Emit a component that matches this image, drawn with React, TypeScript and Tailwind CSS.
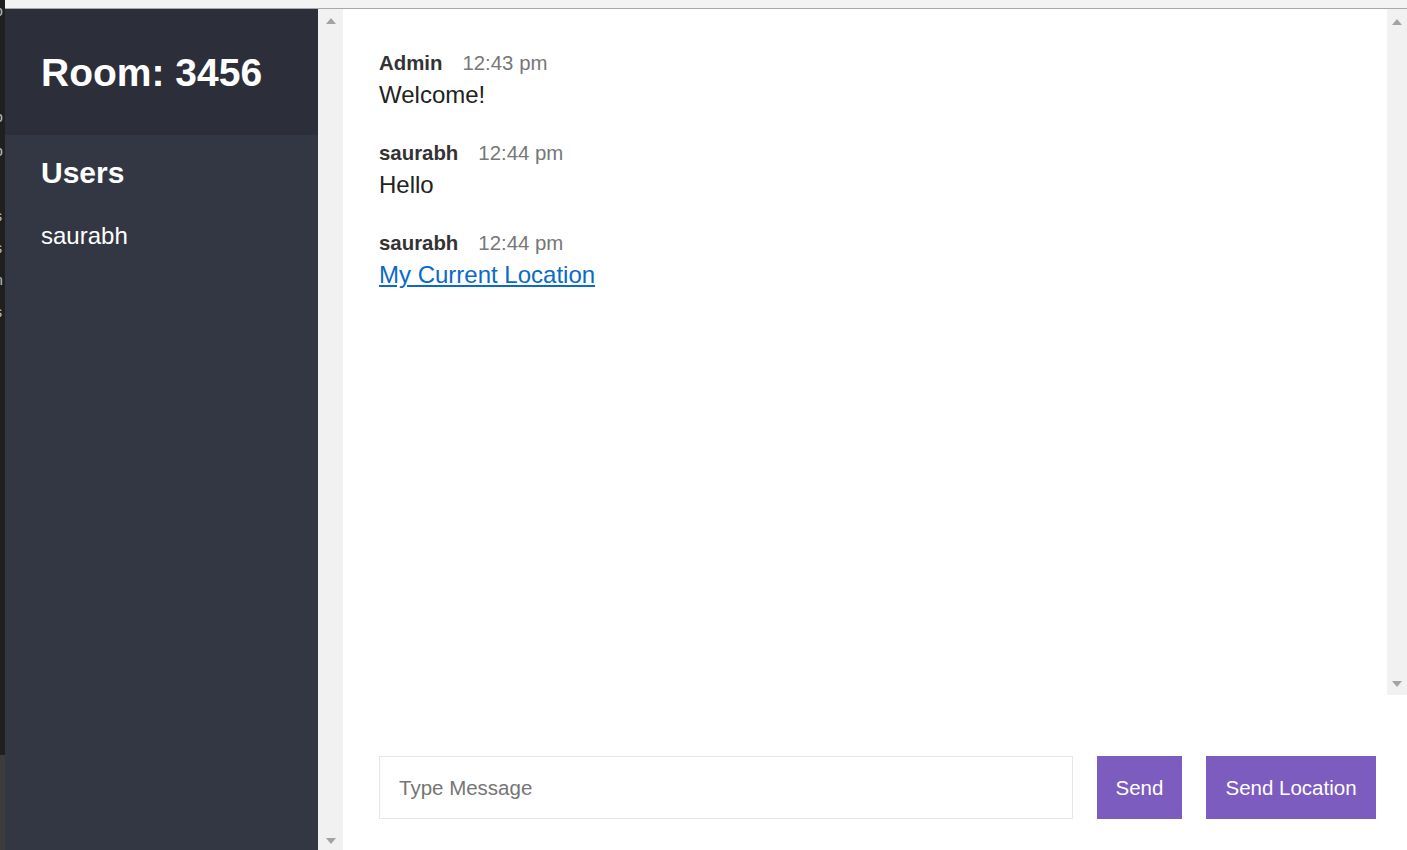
import React from "react";

interface Message {
  author: string;
  time: string;
  text: string;
  link?: boolean;
}

const messages: Message[] = [
  { author: "Admin", time: "12:43 pm", text: "Welcome!" },
  { author: "saurabh", time: "12:44 pm", text: "Hello" },
  { author: "saurabh", time: "12:44 pm", text: "My Current Location", link: true },
];

const users = ["saurabh"];

const ArrowUp = () => (
  <svg width="10" height="6" viewBox="0 0 10 6" className="fill-[#a3a3a3]">
    <path d="M5 0 L10 6 L0 6 Z" />
  </svg>
);

const ArrowDown = () => (
  <svg width="10" height="6" viewBox="0 0 10 6" className="fill-[#a3a3a3]">
    <path d="M0 0 L10 0 L5 6 Z" />
  </svg>
);

// clipped text of the window behind, on the left edge
const EdgeStrip = () => (
  <div className="flex h-full w-[5px] shrink-0 flex-col overflow-hidden">
    <div className="h-[755px] bg-[#1f1f1f] text-[14px] leading-none text-[#b9c4d0]">
      <div className="-ml-[5px] mt-[4px]">o</div>
      <div className="-ml-[5px] mt-[62px] text-[#888]">-</div>
      <div className="-ml-[5px] mt-[16px]">o</div>
      <div className="-ml-[5px] mt-[20px]">o</div>
      <div className="-ml-[5px] mt-[51px]">s</div>
      <div className="-ml-[5px] mt-[18px]">s</div>
      <div className="-ml-[5px] mt-[18px]">n</div>
      <div className="-ml-[5px] mt-[18px]">s</div>
    </div>
    <div className="flex-1 bg-[#3c3c3c]" />
  </div>
);

const Sidebar = () => (
  <div className="flex h-full w-[313px] shrink-0 flex-col bg-[#333744] text-white">
    <div className="flex h-[126px] items-center bg-[#2c2e3a] px-[36px]">
      <h2 className="text-[39px] font-bold leading-none">Room: 3456</h2>
    </div>
    <div className="px-[36px] pt-[20px]">
      <h3 className="text-[30px] font-bold leading-[36px]">Users</h3>
      <ul className="mt-[29px]">
        {users.map((u) => (
          <li key={u} className="text-[24px] leading-[32px]">
            {u}
          </li>
        ))}
      </ul>
    </div>
  </div>
);

const Scrollbar = ({ className }: { className: string }) => (
  <div className={`flex shrink-0 flex-col items-center justify-between bg-[#f1f1f1] ${className}`}>
    <ArrowUp />
    <ArrowDown />
  </div>
);

const App = () => {
  return (
    <div className="flex h-[850px] w-[1407px] overflow-hidden bg-white font-['Liberation_Sans',Arial,sans-serif]">
      <EdgeStrip />
      <div className="flex min-w-0 flex-1 flex-col">
        <div className="h-[9px] shrink-0 border-b border-[#a8a8a8] bg-[#f3f3f3]" />
        <div className="flex min-h-0 flex-1">
          <Sidebar />
          <Scrollbar className="w-[25px] pt-[9px] pb-[6px]" />
          <div className="flex min-w-0 flex-1 flex-col">
            <div className="flex h-[686px] shrink-0">
              <div className="flex-1 px-[36px] pt-[42px]">
                {messages.map((m, i) => (
                  <div key={i} className="mb-[30px]">
                    <p className="flex leading-[24px] text-[20.4px]">
                      <span className="font-bold text-[#333]">{m.author}</span>
                      <span className="ml-[20px] text-[#777]">{m.time}</span>
                    </p>
                    <p className="mt-[4px] text-[24px] leading-[32px] text-[#222]">
                      {m.link ? (
                        <a href="#" className="text-[#0a6ac8] underline">
                          {m.text}
                        </a>
                      ) : (
                        m.text
                      )}
                    </p>
                  </div>
                ))}
              </div>
              <Scrollbar className="w-[20px] pt-[10px] pb-[8px]" />
            </div>
            <div className="flex flex-1 items-start gap-[24px] pl-[36px] pr-[31px] pt-[61px]">
              <input
                placeholder="Type Message"
                className="h-[63px] flex-1 border border-[#e6e6e6] px-[19px] text-[20.5px] text-[#333] outline-none placeholder:text-[#757575]"
              />
              <button className="h-[63px] w-[85px] bg-[#7c5cbf] pt-[2px] text-[20.5px] text-white">Send</button>
              <button className="h-[63px] w-[170px] bg-[#7c5cbf] pt-[2px] text-[20.5px] text-white">Send Location</button>
            </div>
          </div>
        </div>
      </div>
    </div>
  );
};

export default App;
